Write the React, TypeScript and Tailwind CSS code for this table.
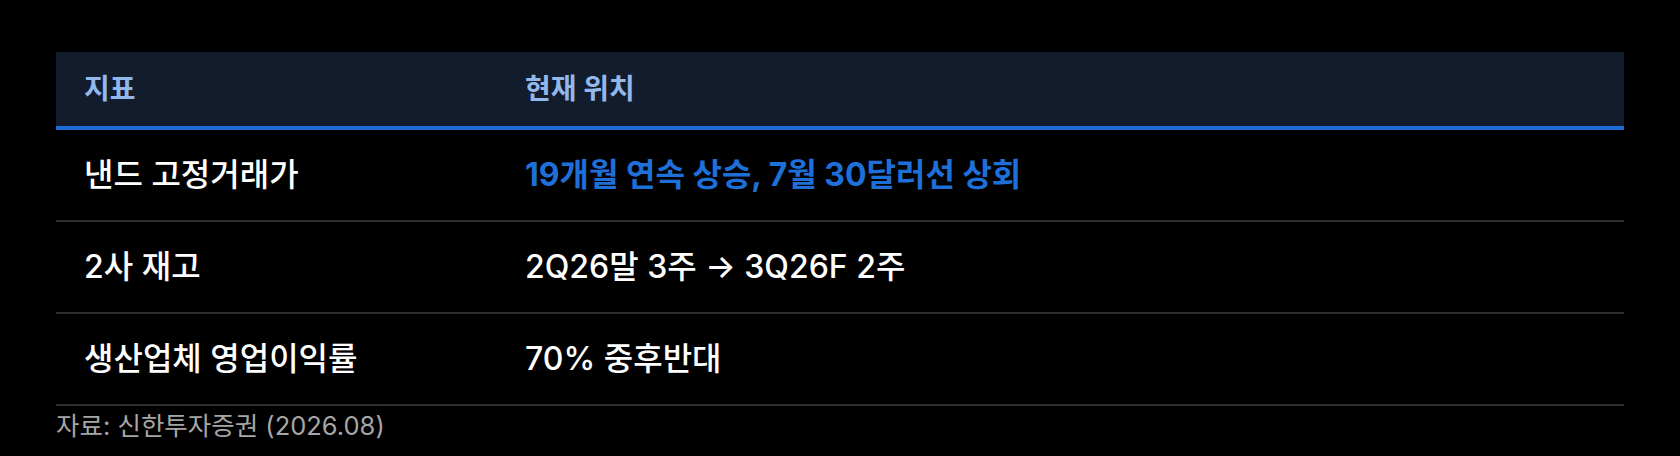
import React from "react";

const rows: { k: string; v: string; hl?: boolean }[] = [
  { k: "낸드 고정거래가", v: "19개월 연속 상승, 7월 30달러선 상회", hl: true },
  { k: "2사 재고", v: "2Q26말 3주 → 3Q26F 2주" },
  { k: "생산업체 영업이익률", v: "70% 중후반대" },
];

export default function App() {
  return (
    <div
      className="w-[1680px] h-[456px] bg-black pt-[52px] px-[56px]"
      style={{ fontFamily: 'Inter, "Noto Sans CJK KR", "Noto Sans", sans-serif' }}
    >
      <table className="w-full border-collapse">
        <thead>
          <tr className="bg-[#121c2c] border-b-[4px] border-[#1f6bd6]">
            <th className="w-[441px] h-[76px] pl-[28px] text-left text-[28px] font-bold text-[#92b7ea]">
              지표
            </th>
            <th className="h-[76px] pl-[28px] text-left text-[28px] font-bold text-[#92b7ea]">
              현재 위치
            </th>
          </tr>
        </thead>
        <tbody>
          {rows.map((r, i) => (
            <tr key={r.k} className="border-b-2 border-[#2f2f2f]">
              <td
                className={
                  i === 0
                    ? "h-[93px] pl-[28px] text-[32px] font-medium text-white"
                    : "h-[92px] pl-[28px] text-[32px] font-medium text-white"
                }
              >
                {r.k}
              </td>
              <td
                className={
                  r.hl
                    ? "pl-[28px] text-[32px] font-bold text-[#1f6fd8]"
                    : "pl-[28px] text-[32px] font-medium text-white"
                }
              >
                {r.v}
              </td>
            </tr>
          ))}
        </tbody>
      </table>
      <div className="mt-[2px] text-[25.5px] text-[#a6a6a6] leading-[36px]">
        자료: 신한투자증권 (2026.08)
      </div>
    </div>
  );
}
